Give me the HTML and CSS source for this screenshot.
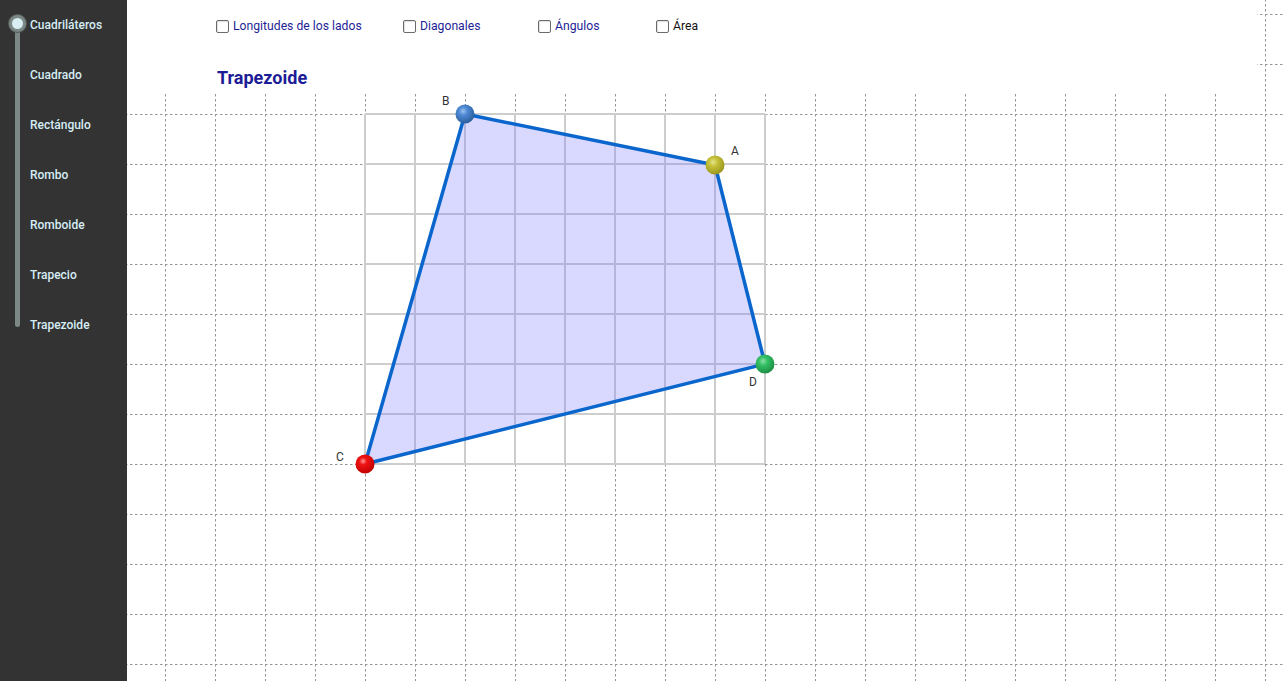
FILE: index.html
```html
<!DOCTYPE html>
<html lang="es">
<head>
<meta charset="utf-8">
<title>Cuadriláteros</title>
<link rel="stylesheet" href="styles.css">
</head>
<body>
<div class="app">
  <nav class="sidebar">
    <div class="track"><span class="knob"></span></div>
    <ul class="menu">
      <li>Cuadriláteros</li>
      <li>Cuadrado</li>
      <li>Rectángulo</li>
      <li>Rombo</li>
      <li>Romboide</li>
      <li>Trapecio</li>
      <li>Trapezoide</li>
    </ul>
  </nav>
  <main class="board">
    <svg class="canvas" width="1156" height="681" viewBox="0 0 1156 681">
      <defs>
        <pattern id="dash" patternUnits="userSpaceOnUse" x="38" y="14" width="50" height="50">
          <path d="M0.5 0 V50" stroke="#949494" stroke-width="1" stroke-dasharray="2.5 2.5" fill="none"/>
          <path d="M0 0.5 H50" stroke="#949494" stroke-width="1" stroke-dasharray="2.5 2.5" fill="none"/>
        </pattern>
        <radialGradient id="gBlue" cx="40%" cy="35%" r="65%">
          <stop offset="0" stop-color="#9cc2ef"/>
          <stop offset="0.35" stop-color="#4d89d4"/>
          <stop offset="1" stop-color="#2c5f9e"/>
        </radialGradient>
        <radialGradient id="gYellow" cx="40%" cy="35%" r="65%">
          <stop offset="0" stop-color="#e6e490"/>
          <stop offset="0.35" stop-color="#c6c23a"/>
          <stop offset="1" stop-color="#9a961e"/>
        </radialGradient>
        <radialGradient id="gGreen" cx="40%" cy="35%" r="65%">
          <stop offset="0" stop-color="#8fe0aa"/>
          <stop offset="0.35" stop-color="#33c064"/>
          <stop offset="1" stop-color="#1f8f47"/>
        </radialGradient>
        <radialGradient id="gRed" cx="40%" cy="35%" r="65%">
          <stop offset="0" stop-color="#ff9a9a"/>
          <stop offset="0.3" stop-color="#f01414"/>
          <stop offset="1" stop-color="#c40000"/>
        </radialGradient>
      </defs>
      <rect x="0" y="0" width="1156" height="681" fill="url(#dash)"/>
      <g stroke="#cdcdcd" stroke-width="2" fill="none">
        <path d="M238 114 V464 M288 114 V464 M338 114 V464 M388 114 V464 M438 114 V464 M488 114 V464 M538 114 V464 M588 114 V464 M638 114 V464"/>
        <path d="M238 114 H638 M238 164 H638 M238 214 H638 M238 264 H638 M238 314 H638 M238 364 H638 M238 414 H638 M238 464 H638"/>
      </g>
      <polygon points="588,165 338,114 238,464 638,364" fill="rgba(120,120,255,0.28)" stroke="#0a66cc" stroke-width="3.5" stroke-linejoin="round"/>
      <circle cx="338" cy="114" r="9.5" fill="url(#gBlue)"/>
      <circle cx="588" cy="165" r="9.5" fill="url(#gYellow)"/>
      <circle cx="638" cy="364" r="9.5" fill="url(#gGreen)"/>
      <circle cx="238" cy="464" r="9.5" fill="url(#gRed)"/>
      <g class="ptlabel">
        <text x="315" y="105">B</text>
        <text x="604" y="155">A</text>
        <text x="622" y="386">D</text>
        <text x="209" y="461">C</text>
      </g>
    </svg>
    <header class="top">
      <div class="checks">
        <label class="check w1"><span class="box"></span><span class="blue">Longitudes de los lados</span></label>
        <label class="check w2"><span class="box"></span><span class="blue">Diagonales</span></label>
        <label class="check w3"><span class="box"></span><span class="blue">Ángulos</span></label>
        <label class="check"><span class="box"></span><span class="black">Área</span></label>
      </div>
      <h1 class="title">Trapezoide</h1>
    </header>
  </main>
</div>
</body>
</html>
```
FILE: styles.css
```css
html, body {
  margin: 0;
  padding: 0;
  background: #ffffff;
  font-family: Roboto, "Liberation Sans", Arial, sans-serif;
}
.app {
  display: flex;
  width: 1283px;
  height: 681px;
  overflow: hidden;
}
.sidebar {
  width: 127px;
  flex: none;
  background: #333333;
  display: flex;
  align-items: flex-start;
}
.track {
  position: relative;
  width: 5px;
  height: 312px;
  margin: 15px 0 0 15px;
  background: #7c8885;
  border-radius: 3px;
}
.knob {
  position: absolute;
  left: -6px;
  top: 0;
  width: 11px;
  height: 11px;
  border-radius: 50%;
  background: #d8eef3;
  border: 3px solid #7c8885;
  box-shadow: 0 0 0 1px #555c5a;
}
.menu {
  list-style: none;
  margin: 1px 0 0 10px;
  padding: 0;
}
.menu li {
  height: 50px;
  line-height: 48px;
  font-size: 12px;
  font-weight: 500;
  color: #d6edf5;
  white-space: nowrap;
}
.board {
  position: relative;
  flex: 1;
  height: 681px;
  background: #ffffff;
}
.canvas {
  display: block;
}
.ptlabel text {
  font-family: Roboto, "Liberation Sans", Arial, sans-serif;
  font-size: 12px;
  fill: #333333;
}
.top {
  position: absolute;
  left: 0;
  top: 0;
  width: 1130px;
  height: 92px;
  background: #ffffff;
  padding: 18px 0 0 89px;
  box-sizing: border-box;
}
.checks {
  display: flex;
  align-items: center;
  height: 16px;
}
.check {
  display: flex;
  align-items: center;
  font-size: 12.2px;
  white-space: nowrap;
}
.w1 { width: 187px; }
.w2 { width: 135px; }
.w3 { width: 118px; }
.box {
  width: 11px;
  height: 11px;
  border: 1px solid #6a6a6a;
  border-radius: 2px;
  background: #ffffff;
  box-shadow: inset 1px 1px 1px rgba(0,0,0,0.12);
  margin-right: 4px;
  flex: none;
}
.blue { color: #1f1f96; }
.black { color: #111111; }
.title {
  margin: 33px 0 0 1px;
  font-size: 18px;
  font-weight: 700;
  color: #1c1c96;
  line-height: 22px;
}
```
